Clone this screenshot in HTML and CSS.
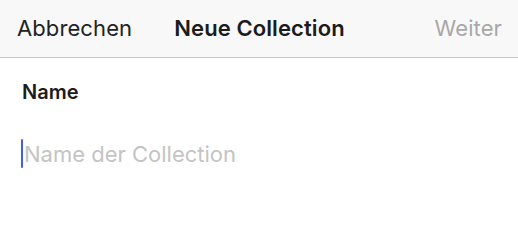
FILE: index.html
```html
<!DOCTYPE html>
<html lang="de">
<head>
<meta charset="utf-8">
<link rel="stylesheet" href="styles.css">
</head>
<body>
<header class="navbar">
  <span class="nav-btn cancel">Abbrechen</span>
  <span class="nav-title">Neue Collection</span>
  <span class="nav-btn next">Weiter</span>
</header>
<main class="form">
  <label class="field-label">Name</label>
  <div class="field-input">
    <span class="caret"></span>
    <span class="placeholder">Name der Collection</span>
  </div>
</main>
</body>
</html>
```
FILE: styles.css
```css
html, body {
  margin: 0;
  padding: 0;
  background: #ffffff;
  font-family: Inter, "Liberation Sans", sans-serif;
}
.navbar {
  height: 58px;
  box-sizing: border-box;
  background: #f8f8f8;
  border-bottom: 1px solid #c8c8c8;
  display: grid;
  grid-template-columns: 1fr auto 1fr;
  align-items: center;
  padding: 0 16px 1px 17px;
  font-size: 22px;
  letter-spacing: 0.1px;
}
.nav-btn.cancel { color: #222222; justify-self: start; }
.nav-btn.next { color: #a8a8a8; justify-self: end; }
.nav-title {
  font-weight: 600;
  color: #1c1c1c;
}
.form {
  padding: 20px 22px 0 22px;
}
.field-label {
  display: block;
  font-size: 20px;
  font-weight: 600;
  color: #1c1c1c;
  line-height: 28px;
}
.field-input {
  margin-top: 32px;
  display: flex;
  align-items: center;
  height: 30px;
}
.caret {
  width: 2px;
  height: 29px;
  background: #3d5ef0;
  margin-left: -1px;
  border-radius: 1px;
}
.placeholder {
  font-size: 22px;
  color: #c4c4c4;
  margin-left: 1px;
  padding-top: 2px;
}
```
